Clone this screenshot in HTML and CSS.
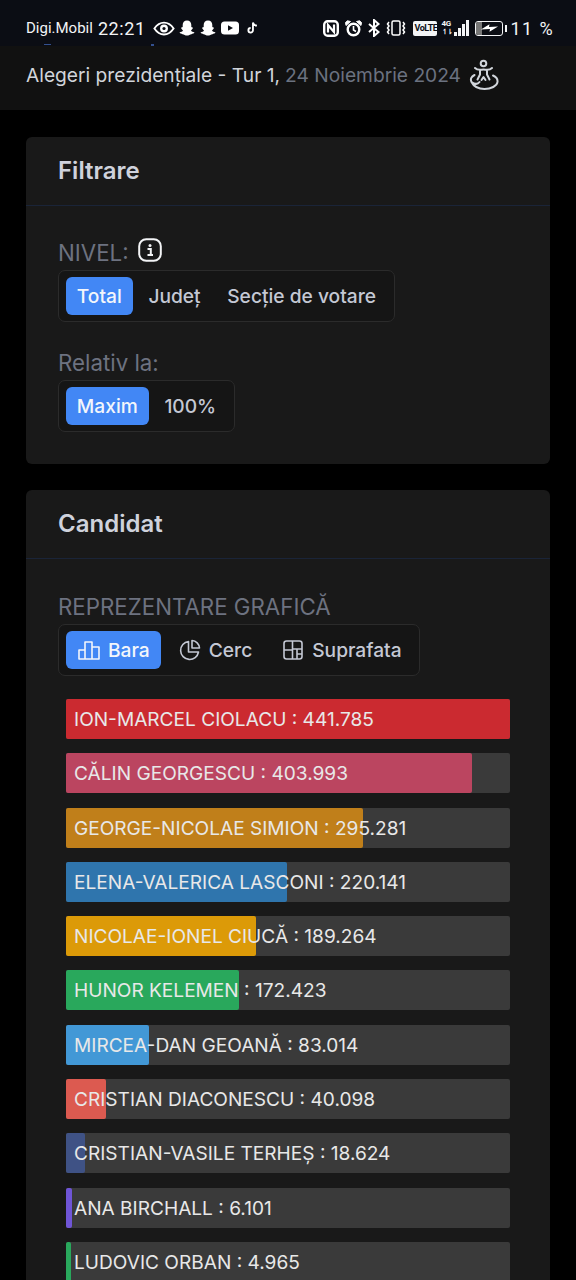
FILE: index.html
```html
<!DOCTYPE html>
<html lang="ro">
<head>
<meta charset="utf-8">
<title>Alegeri prezidențiale</title>
<link rel="stylesheet" href="styles.css">
</head>
<body>
<div class="status">
  <span class="carrier">Digi.Mobil</span>
  <span class="clock">22:21</span>
  <svg class="ic eye" viewBox="0 0 24 16"><path d="M1.5 8C4.500 3.500 8 1.500 12 1.500S19.500 3.500 22.500 8C19.500 12.500 16 14.500 12 14.500S4.500 12.500 1.500 8Z" fill="none" stroke="#fff" stroke-width="2"/><circle cx="12" cy="8" r="4.300" fill="#fff"/><circle cx="12" cy="8" r="1.700" fill="#0b0d14"/></svg>
  <svg class="ic ghost" viewBox="0 0 16 16"><path d="M8 .5C10.800.5 12.300 2.500 12.300 5V7L14 7.700C13.800 9 12.500 9.700 12 10.500C12.500 11.500 14 12 15.500 12.500C15 13.700 13.500 13.500 12.500 14.200C11 14.500 9.800 15.500 8 15.500S5 14.500 3.500 14.200C2.500 13.500 1 13.700.5 12.500C2 12 3.500 11.500 4 10.500C3.500 9.700 2.200 9 2 7.700L3.700 7V5C3.700 2.500 5.200.5 8 .5Z" fill="#fff"/></svg>
  <svg class="ic ghost" viewBox="0 0 16 16"><path d="M8 .5C10.800.5 12.300 2.500 12.300 5V7L14 7.700C13.800 9 12.500 9.700 12 10.500C12.500 11.500 14 12 15.500 12.500C15 13.700 13.500 13.500 12.500 14.200C11 14.500 9.800 15.500 8 15.500S5 14.500 3.500 14.200C2.500 13.500 1 13.700.5 12.500C2 12 3.500 11.500 4 10.500C3.500 9.700 2.200 9 2 7.700L3.700 7V5C3.700 2.500 5.200.5 8 .5Z" fill="#fff"/></svg>
  <svg class="ic yt" viewBox="0 0 18 14"><rect x="0" y="0.500" width="18" height="13" rx="3.500" fill="#fff"/><path d="M7 4.200 12 7 7 9.800Z" fill="#0b0d14"/></svg>
  <svg class="ic tt" viewBox="0 0 12 14"><path d="M6.500 1V9.500A2.500 2.500 0 1 1 4 7M6.500 1C7 3 8.500 4.200 10.800 4.500" fill="none" stroke="#fff" stroke-width="2"/></svg>
  <span class="spacer"></span>
  <svg class="ic nfc" viewBox="0 0 16 17"><rect x="1.200" y="1.200" width="13.600" height="14.600" rx="3.500" fill="none" stroke="#fff" stroke-width="2.400"/><path d="M5 12.500V5L11 12V4.500" fill="none" stroke="#fff" stroke-width="2.200"/></svg>
  <svg class="ic alarm" viewBox="0 0 17 17"><circle cx="8.500" cy="9.500" r="5.800" fill="#0b0d14" stroke="#fff" stroke-width="2.400"/><path d="M8.500 6V10L11 11.500" fill="none" stroke="#fff" stroke-width="1.600"/><path d="M1 5.500 5.500 1.500 2.500 .8 .5 2.500ZM16 5.500 11.500 1.500 14.500 .8 16.500 2.500Z" fill="#fff" stroke="#fff"/></svg>
  <svg class="ic bt" viewBox="0 0 12 18"><path d="M1 5 10.500 13 6 17V1L10.500 5 1 13" fill="none" stroke="#fff" stroke-width="2"/></svg>
  <svg class="ic vib" viewBox="0 0 20 16"><rect x="6" y="1" width="8" height="14" rx="1.500" fill="none" stroke="#fff" stroke-width="1.500"/><path d="M3 2 1.500 4 3 6 1.500 8 3 10 1.500 12 3 14M17 2 18.500 4 17 6 18.500 8 17 10 18.500 12 17 14" fill="none" stroke="#fff" stroke-width="1.500"/></svg>
  <span class="volte">VoLTE</span>
  <span class="net"><span class="net-labels"><span class="g4">4G</span><span class="arrows">↿⇂</span></span><span class="sig s1"></span><span class="sig s2"></span><span class="sig s3"></span><span class="sig s4"></span></span>
  <span class="batt"><span class="batt-body"><span class="batt-level"></span><svg class="bolt" viewBox="0 0 20 10"><path d="M1 6.500 10 1 9.500 4 19 3.500 10 9 10.500 6Z" fill="#fff"/></svg></span><span class="batt-tip"></span></span>
  <span class="pct">11 %</span>
  <i class="speck sp1"></i><i class="speck sp2"></i>
</div>
<header class="top">
  <span class="title">Alegeri prezidențiale - Tur 1,</span>
  <span class="date">24 Noiembrie 2024</span>
  <svg class="tour" viewBox="0 0 30 32"><circle cx="14.500" cy="4.500" r="2.800" fill="none" stroke="#d1d5db" stroke-width="2"/><path d="M6 9C9 12 12 10.500 14.500 10.500S20 12 23 9M11 11.500V15.500L8.500 20.500M18 11.500V15.500L20.500 20.500M12.500 21 14.500 18 16.500 21" fill="none" stroke="#d1d5db" stroke-width="2" stroke-linecap="round" stroke-linejoin="round"/><path d="M5.500 16C2.500 17.500 1 20 2.500 23C5 28 10 30 15.500 30C22 30 28 27 28.500 23C28.800 20 26.500 17.500 24 16.500M2.500 23C6 25.500 9 25 10.500 23" fill="none" stroke="#d1d5db" stroke-width="2" stroke-linecap="round"/></svg>
</header>
<main class="page">
  <section class="card">
    <h2 class="card-head">Filtrare</h2>
    <div class="card-body">
      <div class="label">NIVEL:
        <svg class="info" viewBox="0 0 24 24"><rect x="1.200" y="1.200" width="21.600" height="21.600" rx="7" fill="none" stroke="#f3f4f6" stroke-width="2"/><circle cx="12" cy="7.500" r="1.500" fill="#f3f4f6"/><path d="M9.500 11H12.800V16.500M9.500 17H15" fill="none" stroke="#f3f4f6" stroke-width="2"/></svg>
      </div>
      <div class="tabs">
        <span class="tab on">Total</span>
        <span class="tab">Județ</span>
        <span class="tab">Secție de votare</span>
      </div>
      <div class="label second">Relativ la:</div>
      <div class="tabs">
        <span class="tab on">Maxim</span>
        <span class="tab">100%</span>
      </div>
    </div>
  </section>
  <section class="card">
    <h2 class="card-head">Candidat</h2>
    <div class="card-body lower">
      <div class="label">REPREZENTARE GRAFICĂ</div>
      <div class="tabs icons">
        <span class="tab on"><svg class="tab-ic" viewBox="0 0 24 24"><path d="M2 12H8V21H2ZM8 4H15V21H8ZM15 9H22V21H15Z" fill="none" stroke="currentColor" stroke-width="1.600" stroke-linejoin="round"/></svg>Bara</span>
        <span class="tab"><svg class="tab-ic" viewBox="0 0 24 24"><path d="M10.500 3.500A9 9 0 1 0 20.500 14H10.500Z" fill="none" stroke="currentColor" stroke-width="1.600" stroke-linejoin="round"/><path d="M14 2.500A8 8 0 0 1 21.500 10H14Z" fill="none" stroke="currentColor" stroke-width="1.600" stroke-linejoin="round"/></svg>Cerc</span>
        <span class="tab"><svg class="tab-ic" viewBox="0 0 24 24"><rect x="3" y="3" width="18" height="18" rx="2.500" fill="none" stroke="currentColor" stroke-width="1.600"/><path d="M11.500 3V21M3 12H11.500M11.500 11H21M16 11V21M16 16H21" fill="none" stroke="currentColor" stroke-width="1.600"/></svg>Suprafata</span>
      </div>
      <div class="bars">
        <div class="bar"><i class="fill" style="width:100%;background:#cb2a30"></i><span class="bar-text">ION-MARCEL CIOLACU : 441.785</span></div>
        <div class="bar"><i class="fill" style="width:91.400%;background:#bb4560"></i><span class="bar-text">CĂLIN GEORGESCU : 403.993</span></div>
        <div class="bar"><i class="fill" style="width:66.900%;background:#c07f1a"></i><span class="bar-text">GEORGE-NICOLAE SIMION : 295.281</span></div>
        <div class="bar"><i class="fill" style="width:49.800%;background:#2f75ad"></i><span class="bar-text">ELENA-VALERICA LASCONI : 220.141</span></div>
        <div class="bar"><i class="fill" style="width:42.800%;background:#dc9a08"></i><span class="bar-text">NICOLAE-IONEL CIUCĂ : 189.264</span></div>
        <div class="bar"><i class="fill" style="width:39%;background:#29a85c"></i><span class="bar-text">HUNOR KELEMEN : 172.423</span></div>
        <div class="bar"><i class="fill" style="width:18.800%;background:#4298d6"></i><span class="bar-text">MIRCEA-DAN GEOANĂ : 83.014</span></div>
        <div class="bar"><i class="fill" style="width:9.100%;background:#dc5a50"></i><span class="bar-text">CRISTIAN DIACONESCU : 40.098</span></div>
        <div class="bar"><i class="fill" style="width:4.200%;background:#3f5285"></i><span class="bar-text">CRISTIAN-VASILE TERHEȘ : 18.624</span></div>
        <div class="bar"><i class="fill" style="width:1.400%;background:#6f55d6"></i><span class="bar-text">ANA BIRCHALL : 6.101</span></div>
        <div class="bar"><i class="fill" style="width:1.100%;background:#29a85c"></i><span class="bar-text">LUDOVIC ORBAN : 4.965</span></div>
      </div>
    </div>
  </section>
</main>
</body>
</html>
```
FILE: styles.css
```css
* { box-sizing: border-box; }
html, body { margin: 0; height: 1280px; overflow: hidden; }
body { background: #000; font-family: Inter, "Liberation Sans", sans-serif; color: #d1d5db; }

.status {
  position: relative;
  height: 46px;
  padding: 10px 22px 0 26px;
  background: #0b0d14;
  display: flex;
  align-items: center;
  color: #f3f4f6;
  font-family: Roboto, "Noto Sans", sans-serif;
}
.carrier { font-size: 15px; margin-right: 5px; }
.clock { font-size: 18px; letter-spacing: .6px; margin-right: 7px; }
.ic { display: block; flex: none; }
.eye { width: 22px; height: 15px; margin-right: 4px; }
.ghost { width: 16px; height: 16px; margin-right: 5px; }
.yt { width: 18px; height: 14px; margin-right: 8px; }
.tt { width: 11px; height: 14px; }
.spacer { flex: 1; }
.nfc { width: 16px; height: 17px; margin-right: 6px; }
.alarm { width: 17px; height: 17px; margin-right: 5px; }
.bt { width: 14px; height: 18px; margin-right: 5px; }
.vib { width: 20px; height: 16px; margin-right: 7px; }
.volte {
  background: #f3f4f6; color: #0b0d14; font-size: 9px; font-weight: 700;
  border-radius: 2px; padding: 0 2px; height: 15px; line-height: 15px; width: 24px;
  letter-spacing: -.5px; margin-right: 5px; overflow: hidden; white-space: nowrap;
}
.net { display: flex; align-items: flex-end; height: 16px; gap: 1.500px; margin-right: 6px; }
.net-labels { display: flex; flex-direction: column; font-size: 8px; font-weight: 700; line-height: 8px; width: 11px; }
.g4 { white-space: nowrap; letter-spacing: -.3px; }
.arrows { white-space: nowrap; letter-spacing: -1px; font-size: 7px; }
.sig { width: 2.500px; background: #f3f4f6; display: block; }
.s1 { height: 4px; } .s2 { height: 8px; } .s3 { height: 12px; } .s4 { height: 16px; }
.batt { display: flex; align-items: center; margin-right: 4px; }
.batt-body { position: relative; width: 28px; height: 15px; border: 1.500px solid #f3f4f6; border-radius: 3px; display: block; overflow: hidden; }
.batt-level { display: block; width: 6px; height: 100%; background: #777; }
.bolt { position: absolute; left: 4px; top: 1px; width: 19px; height: 10px; }
.batt-tip { width: 2px; height: 7px; background: #f3f4f6; margin-left: 2px; display: block; }
.pct { font-size: 18px; letter-spacing: 1.400px; white-space: nowrap; }
.speck { position: absolute; top: 44px; height: 1px; background: #33508f; }
.sp1 { left: 44px; width: 7px; }
.sp2 { left: 151px; width: 3px; height: 2px; }

.top {
  height: 64px;
  padding: 0 26px 6px;
  background: #111111;
  display: flex;
  align-items: center;
  font-size: 19.200px;
  gap: 5px;
}
.title { color: #d1d5db; white-space: nowrap; }
.date { color: #6b7280; white-space: nowrap; }
.tour { width: 30px; height: 32px; margin-left: 3px; flex: none; }

.page { padding: 27px 26px 0; display: flex; flex-direction: column; gap: 26px; }
.card { background: #191919; border-radius: 6px; }
.card-head {
  margin: 0;
  height: 69px;
  padding: 0 32px 1px;
  display: flex;
  align-items: center;
  font-size: 24px;
  font-weight: 600;
  color: #cfd2dc;
  border-bottom: 1px solid #1a2438;
}
.card-body { padding: 32px; }
.card-body.lower { padding-top: 33px; }
.label {
  height: 28px;
  margin-bottom: 4px;
  display: flex;
  align-items: center;
  gap: 9px;
  font-size: 22.300px;
  color: #6d7280;
  white-space: nowrap;
}
.label.second { margin-top: 26px; }
.info { width: 24px; height: 24px; margin-top: -4px; }

.tabs {
  display: inline-flex;
  vertical-align: top;
  gap: 5px;
  height: 52px;
  padding: 6px 7px;
  border: 1px solid #2b2b2b;
  border-radius: 7px;
  background: #151515;
}
.tab {
  display: flex;
  align-items: center;
  gap: 7px;
  padding: 0 10.800px;
  border-radius: 6px;
  font-size: 19.200px;
  font-weight: 500;
  color: #c4c8d4;
  white-space: nowrap;
}
.tab.on { background: #4287f5; color: #f3f6fb; }
.tabs.icons .tab { padding: 0 12px; }
.tabs.icons .tab.on { padding: 0 11px; }
.tabs.icons .tab:last-child { padding-right: 10px; }
.tab-ic { width: 24px; height: 24px; flex: none; }

.bars { display: flex; flex-direction: column; gap: 14.300px; margin: 23px 8px 0; }
.bar {
  position: relative;
  flex: none;
  height: 40px;
  background: #3a3a3a;
  border-radius: 2px;
  display: flex;
  align-items: center;
  padding-left: 8px;
}
.fill { position: absolute; left: 0; top: 0; bottom: 0; border-radius: 2px; }
.bar-text { position: relative; font-size: 19.100px; color: #e8e8e8; white-space: nowrap; }
```
